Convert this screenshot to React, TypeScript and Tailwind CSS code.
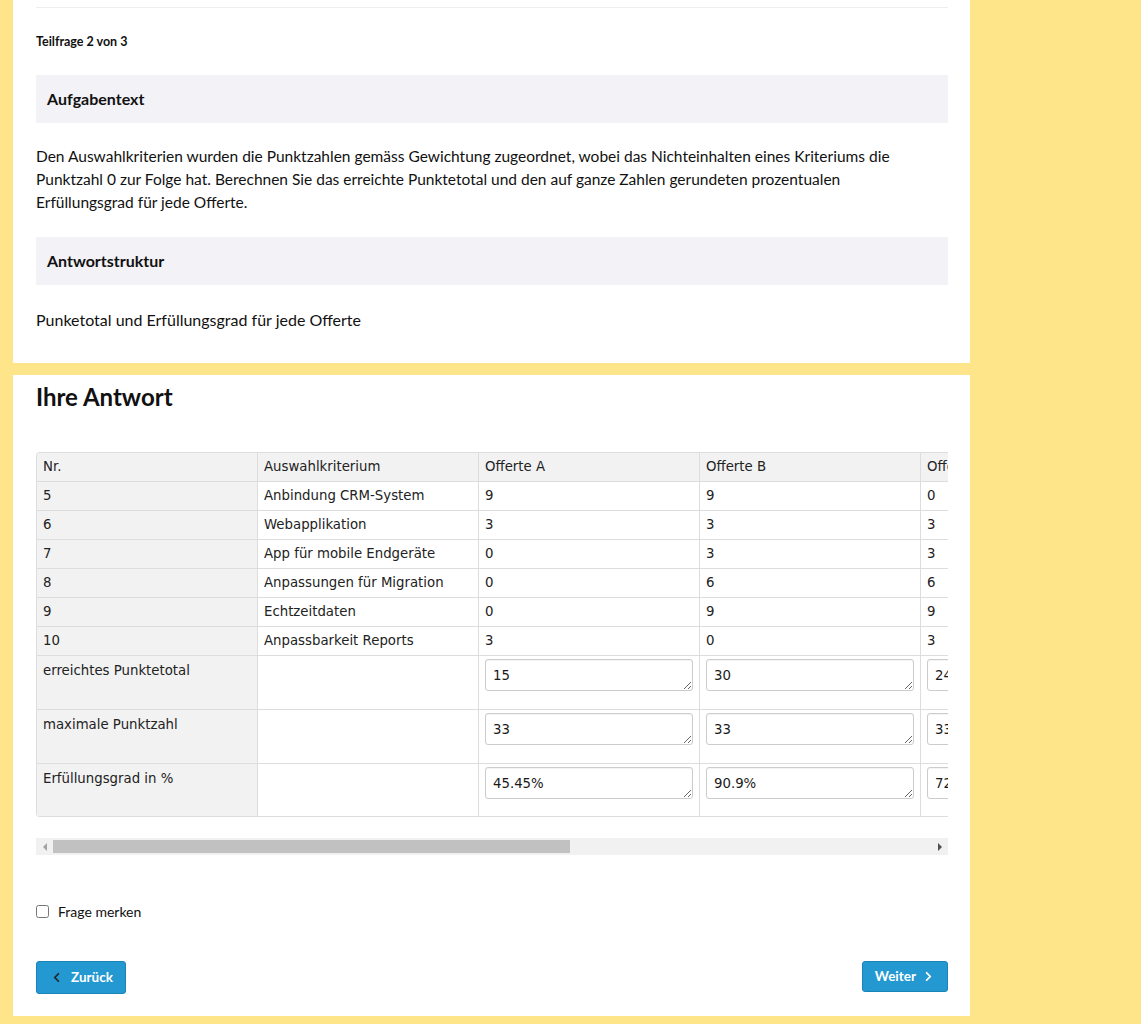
import { FaChevronLeft, FaChevronRight } from "react-icons/fa";

const body = "font-['Lato',sans-serif]";
const tbl = "font-['DejaVu_Sans',sans-serif] text-[13.3px] text-[#222]";

const rows = [
  { nr: "5", name: "Anbindung CRM-System", a: "9", b: "9", c: "0" },
  { nr: "6", name: "Webapplikation", a: "3", b: "3", c: "3" },
  { nr: "7", name: "App für mobile Endgeräte", a: "0", b: "3", c: "3" },
  { nr: "8", name: "Anpassungen für Migration", a: "0", b: "6", c: "6" },
  { nr: "9", name: "Echtzeitdaten", a: "0", b: "9", c: "9" },
  { nr: "10", name: "Anpassbarkeit Reports", a: "3", b: "0", c: "3" },
];

const inputs = [
  { label: "erreichtes Punktetotal", a: "15", b: "30", c: "24", h: "h-[54px]" },
  { label: "maximale Punktzahl", a: "33", b: "33", c: "33", h: "h-[54px]" },
  { label: "Erfüllungsgrad in %", a: "45.45%", b: "90.9%", c: "72.73%", h: "h-[53px]" },
];

const cell = "w-[221px] min-w-[221px] border-r border-b border-[#dddddd] px-[6px] align-middle text-left font-normal whitespace-nowrap";

const Answer = ({ value }: { value: string }) => (
  <textarea
    defaultValue={value}
    rows={1}
    className="block w-[208px] h-[32px] rounded-[3px] border border-[#cccccc] px-[7px] pt-[7px] text-[13.3px] leading-[18px] text-[#1a1a1a] shadow-[inset_0_1px_1px_rgba(0,0,0,0.05)] outline-none font-['DejaVu_Sans',sans-serif]"
  />
);

const App = () => {
  return (
    <div className="w-[1141px] min-h-[1024px] bg-[#ffe58a] pl-[13px] pb-[9px] flex flex-col gap-[12px]">
      {/* Teilfrage */}
      <div className={`w-[957px] bg-white pl-[23px] pr-[22px] pt-[7px] pb-[32px] text-[#111] ${body}`}>
        <div className="border-t border-[#eeeeee]" />
        <p className="mt-[25px] text-[12.5px] font-bold leading-[18px]">Teilfrage 2 von 3</p>
        <div className="mt-[24px] h-[48px] bg-[#f2f2f7] px-[11px] flex items-center">
          <h4 className="text-[16px] font-bold">Aufgabentext</h4>
        </div>
        <p className="mt-[22px] text-[15.5px] leading-[23px] whitespace-nowrap">
          Den Auswahlkriterien wurden die Punktzahlen gemäss Gewichtung zugeordnet, wobei das Nichteinhalten eines Kriteriums die
          <br />
          Punktzahl 0 zur Folge hat. Berechnen Sie das erreichte Punktetotal und den auf ganze Zahlen gerundeten prozentualen
          <br />
          Erfüllungsgrad für jede Offerte.
        </p>
        <div className="mt-[23px] h-[48px] bg-[#f2f2f7] px-[11px] flex items-center">
          <h4 className="text-[16px] font-bold">Antwortstruktur</h4>
        </div>
        <p className="mt-[23px] text-[16px] leading-[23px]">Punketotal und Erfüllungsgrad für jede Offerte</p>
      </div>

      {/* Antwort */}
      <div className={`w-[957px] bg-white pl-[23px] pr-[22px] pt-[7px] pb-[22px] text-[#111] ${body}`}>
        <h2 className="text-[24px] font-bold leading-[30px]">Ihre Antwort</h2>

        <div className="mt-[40px] w-[912px] overflow-hidden">
          <div className="w-[1105px] border-l border-t border-[#dddddd] rounded-tl-[4px] rounded-bl-[4px] overflow-hidden">
            <table className={`border-separate border-spacing-0 ${tbl}`}>
              <thead>
                <tr className="bg-[#f2f2f2] h-[29px]">
                  <th className={cell}>Nr.</th>
                  <th className={cell}>Auswahlkriterium</th>
                  <th className={cell}>Offerte A</th>
                  <th className={cell}>Offerte B</th>
                  <th className={cell}>Offerte C</th>
                </tr>
              </thead>
              <tbody>
                {rows.map((r) => (
                  <tr key={r.nr} className="h-[29px]">
                    <td className={`${cell} bg-[#f2f2f2]`}>{r.nr}</td>
                    <td className={cell}>{r.name}</td>
                    <td className={cell}>{r.a}</td>
                    <td className={cell}>{r.b}</td>
                    <td className={cell}>{r.c}</td>
                  </tr>
                ))}
                {inputs.map((r) => (
                  <tr key={r.label} className={r.h}>
                    <td className={`${cell} bg-[#f2f2f2] align-top pt-[5px]`}>{r.label}</td>
                    <td className={cell} />
                    <td className={`${cell} align-top pt-[3px]`}>
                      <Answer value={r.a} />
                    </td>
                    <td className={`${cell} align-top pt-[3px]`}>
                      <Answer value={r.b} />
                    </td>
                    <td className={`${cell} align-top pt-[3px]`}>
                      <Answer value={r.c} />
                    </td>
                  </tr>
                ))}
              </tbody>
            </table>
          </div>
        </div>

        {/* scrollbar */}
        <div className="mt-[21px] h-[17px] bg-[#f1f1f1] flex items-center">
          <div className="w-[17px] flex justify-center">
            <span className="w-0 h-0 border-y-[4px] border-y-transparent border-r-[4px] border-r-[#a3a3a3]" />
          </div>
          <div className="w-[517px] h-[13px] bg-[#c1c1c1]" />
          <div className="flex-1" />
          <div className="w-[17px] flex justify-center">
            <span className="w-0 h-0 border-y-[4px] border-y-transparent border-l-[4px] border-l-[#505050]" />
          </div>
        </div>

        <label className="mt-[46px] flex items-center gap-[9px] text-[14px]">
          <input type="checkbox" className="w-[13px] h-[13px] m-0" />
          Frage merken
        </label>

        <div className="mt-[39px] flex items-start justify-between">
          <button className="h-[33px] pl-[14px] pr-[12px] flex items-center gap-[9px] rounded-[3px] border border-[#1a84b8] bg-[#2398d1] text-white text-[13.5px] font-bold">
            <FaChevronLeft className="text-[#1e2b33]" size={11} />
            Zurück
          </button>
          <button className="h-[31px] pl-[12px] pr-[13px] flex items-center gap-[7px] rounded-[3px] border border-[#1a84b8] bg-[#2398d1] text-white text-[13.5px] font-bold">
            Weiter
            <FaChevronRight size={11} />
          </button>
        </div>
      </div>
    </div>
  );
};

export default App;
